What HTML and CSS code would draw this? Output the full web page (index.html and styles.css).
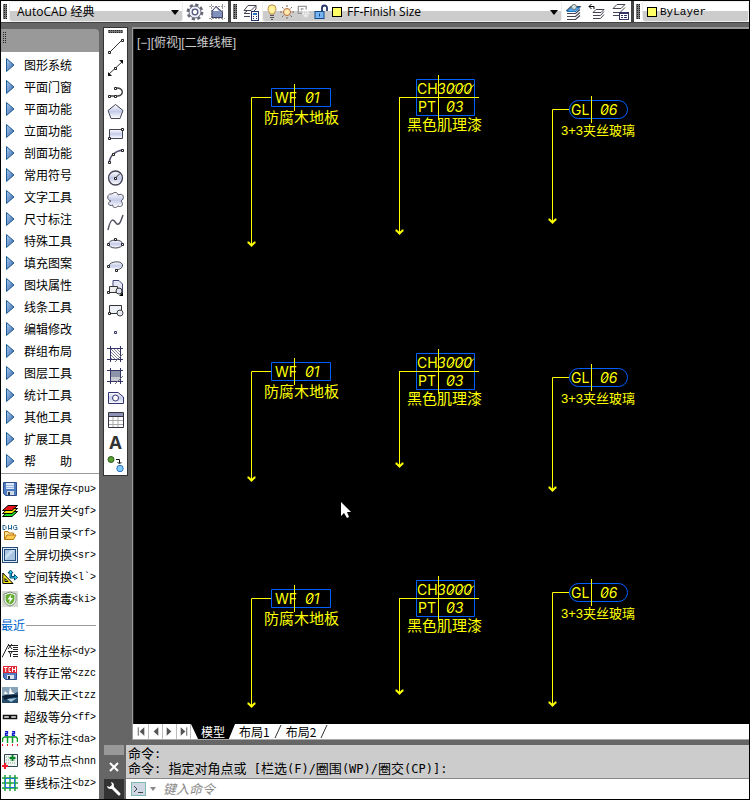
FILE: index.html
```html
<!DOCTYPE html>
<html lang="zh-CN">
<head>
<meta charset="utf-8">
<title>AutoCAD 经典</title>
<meta name="viewport" content="width=device-width, initial-scale=1">
<link rel="stylesheet" href="styles.css">
</head>
<body>
<svg class="defs" aria-hidden="true">
  <defs>
    <linearGradient id="blue" x1="0" y1="0" x2="1" y2="1"><stop offset="0" stop-color="#a9cdf0"/><stop offset="1" stop-color="#3560a8"/></linearGradient>
    <linearGradient id="haze" x1="0" y1="0" x2="0" y2="1"><stop offset="0" stop-color="#fff"/><stop offset=".5" stop-color="#c4cbe8"/><stop offset="1" stop-color="#fff"/></linearGradient>
    <pattern id="diag" width="3" height="3" patternUnits="userSpaceOnUse"><path d="M0 0L3 3" stroke="#667" stroke-width=".8"/></pattern>
    <symbol id="tri" viewBox="0 0 9 14"><path d="M.5 .5L8 7L.5 13.500Z" fill="url(#blue)" stroke="#1f5c93"/></symbol>
    <symbol id="sheets" viewBox="0 0 18 18"><path d="M6 3.500H15L11 7.500H2ZM2 10.500H10.500L15 6.500M2 13.500H10.500L15 9.500M2 16.500H10.500L15 12.500" fill="none" stroke="#445" stroke-width="1.200"/></symbol>
  </defs>
</svg>

<header class="bars">
  <div class="bar">
    <span class="grip"></span>
    <div class="combo combo-space"><select aria-label="工作空间"><option>AutoCAD 经典</option></select></div>
    <div class="icons">
      <button aria-label="工作空间设置"><svg width="18" height="18" viewBox="0 0 18 18"><circle cx="9" cy="9" r="7.200" fill="none" stroke="#667" stroke-width="2.400" stroke-dasharray="3.200 2.450"/><circle cx="9" cy="9" r="6" fill="#eef1fa" stroke="#667"/><circle cx="9" cy="9" r="2.800" fill="#fff" stroke="#557" stroke-width="1.300"/></svg></button>
      <button aria-label="我的工作空间"><svg width="18" height="18" viewBox="0 0 18 18"><path d="M1 3.500H17M1 15.500H17M3.500 1V17M14.500 1V17" stroke="#999" stroke-dasharray="2 1"/><path d="M4 8L8 3.500L14.500 9V14.500H4Z" fill="#8090bd" stroke="#446"/><path d="M5 8H11L8 4.500Z" fill="#fff"/></svg></button>
    </div>
  </div>
  <div class="bar">
    <span class="grip"></span>
    <div class="icons icons-one">
      <button aria-label="图层特性"><svg width="18" height="18" viewBox="0 0 18 18"><path d="M6 2.500H14L9 7.500H2ZM2 10.500H8M2 13.500H8M5 8L2 10.500M14 2.500V6L12 8" fill="none" stroke="#445"/><rect x="9.500" y="8.500" width="7" height="9" fill="#fff" stroke="#236"/><path d="M11 11H15" stroke="#27b" stroke-width="2"/><path d="M11 13.500H12M14 13.500H15M11 15.500H12M14 15.500H15" stroke="#236"/></svg></button>
    </div>
    <div class="combo combo-layer">
      <svg width="10" height="16" viewBox="0 0 10 16"><path d="M3 10C3 8 1 7.500 1 4.800A4 4 0 0 1 9 4.800C9 7.500 7 8 7 10Z" fill="#fff3a0" stroke="#b9863a"/><path d="M3 11.500H7M3 13.500H7M4 15.500H6" stroke="#555"/></svg>
      <svg width="14" height="14" viewBox="0 0 14 14"><circle cx="7" cy="7" r="3.500" fill="#ffe9ac" stroke="#b06b40"/><path d="M7 0V2M7 12V14M0 7H2M12 7H14M2 2L3.500 3.500M10.500 10.500L12 12M12 2L10.500 3.500M2 12L3.500 10.500" stroke="#864"/></svg>
      <svg width="14" height="16" viewBox="0 0 16 16"><path d="M6 9.500H1.500V1.500H10.500V5M5 6V4.500H7.500" fill="none" stroke="#999" stroke-width="1.500"/><path d="M10 6V15M6 10H15M7 7L13 14M13 7L7 14" stroke="#f4f4f4" stroke-width="1.500" stroke-dasharray="2 1"/></svg>
      <svg width="15" height="16" viewBox="0 0 15 16"><path d="M8 8V4A2.500 2.500 0 0 1 13 4V7" fill="none" stroke="#236" stroke-width="1.800"/><rect x="1" y="7.500" width="9" height="7" fill="#7ab4f0" stroke="#124a8c"/><path d="M5.500 9.500V12.500" stroke="#124a8c"/></svg>
      <span class="swatch"></span>
      <select aria-label="图层"><option>FF-Finish Size</option></select>
    </div>
    <div class="icons icons-three">
      <button aria-label="置为当前"><svg width="18" height="18" viewBox="0 0 18 18"><use href="#sheets"/><path d="M6 4.500H15L11 8.500H2Z" fill="#55a8ef" stroke="#27b"/><circle cx="9" cy="4" r="2.500" fill="#d8e4e4" stroke="#677"/></svg></button>
      <button aria-label="上一个图层"><svg width="18" height="18" viewBox="0 0 18 18"><path d="M8 6.500H16L13 9.500H5ZM5 12.500H12.500L16 8.500M5 15.500H12.500L16 11.500" fill="none" stroke="#445"/><path d="M1 3.500H6V6M3.500 1L1 3.500L3.500 6" fill="none" stroke="#000"/></svg></button>
      <button aria-label="图层状态"><svg width="18" height="18" viewBox="0 0 18 18"><path d="M6 1.500H14L10 5.500H2ZM2 9.500H9L14 4.500M2 12.500H8" fill="none" stroke="#445"/><rect x="8.500" y="9.500" width="9" height="7" fill="#fff" stroke="#336"/><path d="M9 10.500H17M10 12.500H12M13 12.500H16M10 14.500H12M13 14.500H16" stroke="#336"/></svg></button>
    </div>
  </div>
  <div class="bar bar-fill">
    <span class="grip"></span>
    <div class="combo combo-color"><span class="swatch"></span><select class="mono" aria-label="颜色"><option>ByLayer</option></select></div>
  </div>
</header>

<div class="work">
  <aside class="side">
    <div class="side-head"><span class="grip-dots"></span></div>
    <nav class="side-body">
      <div class="group">
        <button class="item"><svg class="tri"><use href="#tri"/></svg>图形系统</button>
        <button class="item"><svg class="tri"><use href="#tri"/></svg>平面门窗</button>
        <button class="item"><svg class="tri"><use href="#tri"/></svg>平面功能</button>
        <button class="item"><svg class="tri"><use href="#tri"/></svg>立面功能</button>
        <button class="item"><svg class="tri"><use href="#tri"/></svg>剖面功能</button>
        <button class="item"><svg class="tri"><use href="#tri"/></svg>常用符号</button>
        <button class="item"><svg class="tri"><use href="#tri"/></svg>文字工具</button>
        <button class="item"><svg class="tri"><use href="#tri"/></svg>尺寸标注</button>
        <button class="item"><svg class="tri"><use href="#tri"/></svg>特殊工具</button>
        <button class="item"><svg class="tri"><use href="#tri"/></svg>填充图案</button>
        <button class="item"><svg class="tri"><use href="#tri"/></svg>图块属性</button>
        <button class="item"><svg class="tri"><use href="#tri"/></svg>线条工具</button>
        <button class="item"><svg class="tri"><use href="#tri"/></svg>编辑修改</button>
        <button class="item"><svg class="tri"><use href="#tri"/></svg>群组布局</button>
        <button class="item"><svg class="tri"><use href="#tri"/></svg>图层工具</button>
        <button class="item"><svg class="tri"><use href="#tri"/></svg>统计工具</button>
        <button class="item"><svg class="tri"><use href="#tri"/></svg>其他工具</button>
        <button class="item"><svg class="tri"><use href="#tri"/></svg>扩展工具</button>
        <button class="item"><svg class="tri"><use href="#tri"/></svg>帮　　助</button>
      </div>
      <div class="group group-ruled">
        <button class="item item-pic"><svg class="pic" viewBox="0 0 16 16"><path d="M1.500 1.500H14.500V14.500H3.500L1.500 12.500Z" fill="#4d7cc0" stroke="#2b4c86"/><path d="M4 2H12V8H4Z" fill="#dce9f8"/><path d="M4 4.500H12M4 6.500H12" stroke="#9bb8dc"/><path d="M5 10H12V14H5Z" fill="#cfd8e4"/><path d="M6 11H8V14H6Z" fill="#234"/></svg>清理保存<span class="key">&lt;pu&gt;</span></button>
        <button class="item item-pic"><svg class="pic" viewBox="0 0 16 16"><path d="M6 8.500H15.500L10 13.500H.5Z" fill="#1bdc24" stroke="#000"/><path d="M6 5.500H15.500L10 10.500H.5Z" fill="#ffe800" stroke="#000"/><path d="M6 2.500H15.500L10 7.500H.5Z" fill="#e5151c" stroke="#000"/></svg>归层开关<span class="key">&lt;gf&gt;</span></button>
        <button class="item item-pic"><svg class="pic" viewBox="0 0 16 16"><path d="M1 0V4.500H3L4 3.500V1.500L3 .5H1M6.500 0V4.500L8 3L9.500 4.500V0M15 1L14 .5H12.500L11.500 1.500V3.500L12.500 4.500H15V2.500H13.500" fill="none" stroke="#2d6b96"/><path d="M2.500 14.500V6.500H6L7 8H11.500V10" fill="#ffe28b" stroke="#b87716"/><path d="M2.500 14.500L5 10H14L11.500 14.500Z" fill="#ffc94c" stroke="#b87716"/></svg>当前目录<span class="key">&lt;rf&gt;</span></button>
        <button class="item item-pic"><svg class="pic" viewBox="0 0 16 16"><rect x=".5" y=".5" width="15" height="15" fill="#dcebf7" stroke="#234a78"/><rect x="2.500" y="2.500" width="11" height="11" fill="#a9c3e2" stroke="#234a78"/><path d="M3 13V9L9 3H13Z" fill="#c9dff0"/></svg>全屏切换<span class="key">&lt;sr&gt;</span></button>
        <button class="item item-pic"><svg class="pic" viewBox="0 0 16 16"><path d="M.8 4V14.500H11Z" fill="#f9e51e" stroke="#000"/><path d="M3 9.500V12.500H6Z" fill="#fff" stroke="#000"/><path d="M8 9V4H6L8.500 1L11 4H9.500V7.500H12.500V5.500L15.500 8.500L12.500 11V9Z" fill="#27d5ee" stroke="#064d79"/></svg>空间转换<span class="key">&lt;l`&gt;</span></button>
        <button class="item item-pic"><svg class="pic" viewBox="0 0 16 16"><rect width="16" height="16" fill="#d5dad2"/><path d="M8 1L14 3V8C14 12 11 14 8 15C5 14 2 12 2 8V3Z" fill="#fff" stroke="#798a78"/><path d="M8 2.500L12.500 4V8C12.500 11 10.500 12.500 8 13.500C5.500 12.500 3.500 11 3.500 8V4Z" fill="#64ad31"/><path d="M9.500 3L5.500 8.500H8L6.500 13L11 7H8.500Z" fill="#fff"/></svg>查杀病毒<span class="key">&lt;ki&gt;</span></button>
      </div>
      <h2 class="recent">最近</h2>
      <div class="group">
        <button class="item item-pic"><svg class="pic" viewBox="0 0 16 16"><path d="M0 14.500L6 2.500H16M6 1L10 6M10 1L6 6M11 4.500H16M11 6.500H16M6 8.500H16M7 9L8.500 11V14M10 9L8.500 11M11 11.500H16M11 13.500H16" fill="none" stroke="#222"/></svg>标注坐标<span class="key">&lt;dy&gt;</span></button>
        <button class="item item-pic"><svg class="pic" viewBox="0 0 16 16"><path d="M1.500 1.500H14.500V14.500H3.500L1.500 12.500Z" fill="#557bc2" stroke="#2b4c86"/><path d="M1 1H15V8H1Z" fill="#e02630"/><path d="M2 2.500H5.500M3.700 2.500V7M9 2.500H7V6.500H9M10.500 2V7M13.500 2V7M10.500 4.500H13.500" fill="none" stroke="#fff"/><path d="M5 10H12V14H5Z" fill="#dde4ee"/><path d="M6 11H8V14H6Z" fill="#234"/></svg>转存正常<span class="key">&lt;zzc</span></button>
        <button class="item item-pic"><svg class="pic" viewBox="0 0 16 16"><rect width="16" height="16" fill="#274c6c"/><path d="M0 0H16V5L11 7L6 9H0Z" fill="#88a2b8"/><path d="M8 0L10 5L13 7L7 7ZM3 4L6 7H2Z" fill="#fff"/><path d="M0 9C5 7 10 8 16 8V10C10 10 6 12 3 13Z" fill="#0b2036"/><path d="M5 12L15 11L9 15Z" fill="#9fc3dc"/></svg>加载天正<span class="key">&lt;tzz</span></button>
        <button class="item item-pic"><svg class="pic" viewBox="0 0 16 16"><path d="M1.500 6.500H7.500V9.500H1.500ZM8.500 6.500H14.500V9.500H8.500Z" fill="#fff" stroke="#111" stroke-width="1.500"/><path d="M3 8H6M10 8H13" stroke="#aaa"/></svg>超级等分<span class="key">&lt;ff&gt;</span></button>
        <button class="item item-pic"><svg class="pic" viewBox="0 0 16 16"><path d="M3 .5H5.500V2.500H3.500V4.500H6M10 .5H12.500V2.500H10.500V4.500H13" fill="none" stroke="#12c" stroke-width="1.300"/><path d="M.5 11V7.500L2.500 6H14L15.500 7.500V11M5.500 6V12M10.500 6V12" fill="none" stroke="#079f20" stroke-width="1.500"/><path d="M.5 13V15M5.500 13V15M10.500 13V15M15.500 13V15" stroke="#e12"/></svg>对齐标注<span class="key">&lt;da&gt;</span></button>
        <button class="item item-pic"><svg class="pic" viewBox="0 0 16 16"><path d="M2.500 1.500H15.500V13.500H2.500Z" fill="#edf5ef" stroke="#345"/><path d="M4 4H14M4 7H14M4 10H14" stroke="#90a5a0" stroke-dasharray="1 1"/><path d="M10.500 2V8M7.500 5H13.500" stroke="#078525" stroke-width="2"/><path d="M3 10V16M0 13H6" stroke="#f01b29" stroke-width="2"/></svg>移动节点<span class="key">&lt;hnn</span></button>
        <button class="item item-pic"><svg class="pic" viewBox="0 0 16 16"><path d="M3 0V16M8 0V16M13 0V16M0 3H16M0 8H16M0 13H16" stroke="#18a238" stroke-width="1.500"/><path d="M3.500 3.500H12.500V12.500H3.500Z" fill="none" stroke="#27d"/></svg>垂线标注<span class="key">&lt;bz&gt;</span></button>
      </div>
    </nav>
  </aside>

  <main class="main">
    <div class="stage">
      <div class="tools">
        <div class="tools-head"></div>
        <button aria-label="直线"><svg viewBox="0 0 22 22"><path d="M4 18L17 5" stroke="#333"/><path d="M3.500 16.500h2v2h-2zM16.500 4.500h2v2h-2z" fill="#fff" stroke="#222"/></svg></button>
        <button aria-label="构造线"><svg viewBox="0 0 22 22"><path d="M3 18L18 4" stroke="#333"/><path d="M3 19V15L7 19ZM18 3V7L14 3Z" fill="#111"/><path d="M9.500 10.500h2v2h-2z" fill="#fff" stroke="#222"/></svg></button>
        <button aria-label="多段线"><svg viewBox="0 0 22 22"><path d="M4 17H13C19 17 19 8 11 9" fill="none" stroke="#444" stroke-width="1.500"/><path d="M3.500 16.500h2v2h-2zM9.500 16.500h2v2h-2zM9.500 8.500h2v2h-2z" fill="#fff" stroke="#222"/></svg></button>
        <button aria-label="多边形"><svg viewBox="0 0 22 22"><path d="M10.500 3.500L18 9.500L15 17.500H6L3 9.500Z" fill="url(#haze)" stroke="#445"/></svg></button>
        <button aria-label="矩形"><svg viewBox="0 0 22 22"><path d="M4.500 6.500H17.500V15.500H4.500Z" fill="url(#haze)" stroke="#445"/><path d="M3.500 14.500h2v2h-2zM16.500 5.500h2v2h-2z" fill="#fff" stroke="#222"/></svg></button>
        <button aria-label="圆弧"><svg viewBox="0 0 22 22"><path d="M4 18C5 11 10 6 18 5" fill="none" stroke="#557" stroke-width="1.500"/><path d="M3.500 16.500h2v2h-2zM7.500 8.500h2v2h-2zM16.500 4.500h2v2h-2z" fill="#fff" stroke="#222"/></svg></button>
        <button aria-label="圆"><svg viewBox="0 0 22 22"><circle cx="10.500" cy="11" r="7" fill="url(#haze)" stroke="#445" stroke-width="1.300"/><path d="M10.500 11L15 6.500" stroke="#333"/><path d="M9.500 10.500h2v2h-2z" fill="#fff" stroke="#222"/></svg></button>
        <button aria-label="修订云线"><svg viewBox="0 0 22 22"><path d="M6 12C1 11 2 4 7 5C10 2 13 4 13 6C19 3 20 10 16 12C19 15 17 19 13 17C10 20 7 18 8 16C3 18 2 13 6 12Z" fill="url(#haze)" stroke="#556"/></svg></button>
        <button aria-label="样条曲线"><svg viewBox="0 0 22 22"><path d="M3 19C6 5 9 9 11 12C14 16 16 10 18 4" fill="none" stroke="#556" stroke-width="1.500"/></svg></button>
        <button aria-label="椭圆"><svg viewBox="0 0 22 22"><ellipse cx="10.500" cy="11" rx="7" ry="4" fill="url(#haze)" stroke="#445"/><path d="M2.500 10.500h2v2h-2zM16.500 10.500h2v2h-2zM9.500 5.500h2v2h-2z" fill="#fff" stroke="#222"/></svg></button>
        <button aria-label="椭圆弧"><svg viewBox="0 0 22 22"><path d="M4 12C3 6 17 5 17.500 10C18 14 12 15 10 15" fill="url(#haze)" stroke="#445"/><path d="M2.500 10.500h2v2h-2zM10.500 14.500h2v2h-2z" fill="#fff" stroke="#222"/></svg></button>
        <button aria-label="插入块"><svg viewBox="0 0 22 22"><path d="M8 3.500H14L17.500 7V15.500H8Z" fill="#e4e7f6" stroke="#447"/><path d="M4.500 9.500H12.500V15.500H4.500Z" fill="#eee" stroke="#333"/><circle cx="14" cy="14" r="3" fill="#dde3f0" stroke="#333"/><path d="M2.500 14.500h2v2h-2z" fill="#fff" stroke="#222"/><path d="M14 19H18V15Z" fill="#000"/></svg></button>
        <button aria-label="创建块"><svg viewBox="0 0 22 22"><path d="M4.500 6.500H16.500V14.500H4.500Z" fill="#edf0f6" stroke="#333"/><circle cx="15" cy="14" r="3" fill="#e5e9f2" stroke="#444"/><path d="M3.500 13.500h2v2h-2z" fill="#fff" stroke="#222"/></svg></button>
        <button aria-label="点"><svg viewBox="0 0 22 22"><path d="M9.500 10.500h2v2h-2z" fill="#fff" stroke="#336"/></svg></button>
        <button aria-label="图案填充"><svg viewBox="0 0 22 22"><path d="M5 6H16V16H5Z" fill="url(#diag)"/><path d="M2 5.500H18M2 16.500H18M5.500 3V19M15.500 3V19" stroke="#336"/><path d="M10 19L18 11" stroke="#777"/></svg></button>
        <button aria-label="渐变色"><svg viewBox="0 0 22 22"><path d="M6 6H15V16H6Z" fill="#8c93a8"/><path d="M6 12H15V16H6Z" fill="#c6c9d0"/><path d="M2 5.500H18M2 16.500H18M5.500 3V19M15.500 3V19" stroke="#336"/><path d="M10 19L18 11" stroke="#777"/></svg></button>
        <button aria-label="面域"><svg viewBox="0 0 22 22"><path d="M3.500 16.500V5.500H13L18.500 10V16.500Z" fill="url(#haze)" stroke="#337"/><circle cx="10.500" cy="11" r="3" fill="#fff" stroke="#337"/></svg></button>
        <button aria-label="表格"><svg viewBox="0 0 22 22"><path d="M3 4H18V8H3Z" fill="#8d92b4"/><path d="M3 11.500H18M3 15.500H18M8 8V18M13 8V18" stroke="#aaa"/><path d="M3.500 3.500H18.500V18.500H3.500ZM3 7.500H18" fill="none" stroke="#334"/></svg></button>
        <button class="letter" aria-label="多行文字">A</button>
        <button aria-label="添加选定对象"><svg viewBox="0 0 22 22"><circle cx="6" cy="6.500" r="3" fill="#5c9d35" stroke="#2d621b"/><circle cx="15" cy="15.500" r="3.200" fill="#85c8fa" stroke="#2875b8"/><path d="M11 6.500H14.500V10M12.500 9L14.500 11L16.500 9" fill="none" stroke="#111"/></svg></button>
      </div>

      <section class="view">
        <div class="canvas">
          <p class="view-name">[−][俯视][二维线框]</p>
          <svg class="drawing" role="img" aria-label="材料标注">
            <defs>
              <path id="zero" class="line" d="M1.500 -1L9 -9.500"/>
              <g id="wood"><path class="blue" d="M20.500 -8.500H79.500V9.500H20.500Z"/><path class="line" d="M43.500 -13V14"/><use href="#zero" x="54" y="6"/></g>
              <g id="paint"><path class="blue" d="M17.500 -17.500H75.500V18.500H17.500Z"/><path class="line" d="M39.500 -22V23M0 .5H80"/><use href="#zero" x="48" y="-3"/><use href="#zero" x="57" y="-3"/><use href="#zero" x="66" y="-3"/><use href="#zero" x="47" y="15"/></g>
              <g id="glass"><rect class="blue" x="17.500" y="-8.500" width="58" height="18" rx="9"/><path class="line" d="M39.500 -13V14"/><use href="#zero" x="48" y="6"/></g>
              <path id="head" class="tip" d="M-3.500 -3.500H-2.500L.5 -.5L3.500 -3.500H4.500"/>
            </defs>
            <g transform="translate(117 68)"><path class="line" d="M20 .5H.5V149"/><use href="#head" y="149"/><use href="#wood"/><text class="code" x="24" y="6">WF</text><text class="code slant" x="54" y="6">01</text><text class="name" x="13" y="26">防腐木地板</text></g>
            <g transform="translate(117 342)"><path class="line" d="M20 .5H.5V110"/><use href="#head" y="110"/><use href="#wood"/><text class="code" x="24" y="6">WF</text><text class="code slant" x="54" y="6">01</text><text class="name" x="13" y="26">防腐木地板</text></g>
            <g transform="translate(117 569)"><path class="line" d="M20 .5H.5V109"/><use href="#head" y="109"/><use href="#wood"/><text class="code" x="24" y="6">WF</text><text class="code slant" x="54" y="6">01</text><text class="name" x="13" y="26">防腐木地板</text></g>

            <g transform="translate(265 68)"><path class="line" d="M.5 0V137"/><use href="#head" y="137"/><use href="#paint"/><text class="code" x="18" y="-3">CH</text><text class="code slant" x="38" y="-3">3000</text><text class="code" x="19" y="15">PT</text><text class="code slant" x="47" y="15">03</text><text class="name" x="8" y="33">黑色肌理漆</text></g>
            <g transform="translate(265 342)"><path class="line" d="M.5 0V96"/><use href="#head" y="96"/><use href="#paint"/><text class="code" x="18" y="-3">CH</text><text class="code slant" x="38" y="-3">3000</text><text class="code" x="19" y="15">PT</text><text class="code slant" x="47" y="15">03</text><text class="name" x="8" y="33">黑色肌理漆</text></g>
            <g transform="translate(265 569)"><path class="line" d="M.5 0V96"/><use href="#head" y="96"/><use href="#paint"/><text class="code" x="18" y="-3">CH</text><text class="code slant" x="38" y="-3">3000</text><text class="code" x="19" y="15">PT</text><text class="code slant" x="47" y="15">03</text><text class="name" x="8" y="33">黑色肌理漆</text></g>

            <g transform="translate(418 80)"><path class="line" d="M17 .5H.5V114"/><use href="#head" y="114"/><use href="#glass"/><text class="code" x="19" y="6">GL</text><text class="code slant" x="48" y="6">06</text><text class="name name-small" x="9" y="26">3+3夹丝玻璃</text></g>
            <g transform="translate(418 348)"><path class="line" d="M17 .5H.5V114"/><use href="#head" y="114"/><use href="#glass"/><text class="code" x="19" y="6">GL</text><text class="code slant" x="48" y="6">06</text><text class="name name-small" x="9" y="26">3+3夹丝玻璃</text></g>
            <g transform="translate(418 563)"><path class="line" d="M17 .5H.5V114"/><use href="#head" y="114"/><use href="#glass"/><text class="code" x="19" y="6">GL</text><text class="code slant" x="48" y="6">06</text><text class="name name-small" x="9" y="26">3+3夹丝玻璃</text></g>

            <path d="M207 473V487L210 484L213 489L215 488L213 483H217Z" fill="#fff"/>
          </svg>
        </div>
        <div class="tabs">
          <button class="step" aria-label="第一个"><svg viewBox="0 0 14 14"><path d="M3.500 2V11" stroke="#555"/><path d="M10 2V11L5 6.500Z" fill="#555"/></svg></button>
          <button class="step" aria-label="上一个"><svg viewBox="0 0 14 14"><path d="M10 2V11L5 6.500Z" fill="#555"/></svg></button>
          <button class="step" aria-label="下一个"><svg viewBox="0 0 14 14"><path d="M4 2V11L9 6.500Z" fill="#555"/></svg></button>
          <button class="step" aria-label="最后一个"><svg viewBox="0 0 14 14"><path d="M10.500 2V11" stroke="#555"/><path d="M4 2V11L9 6.500Z" fill="#555"/></svg></button>
          <button class="tab tab-on">模型</button>
          <button class="tab">布局1</button>
          <svg class="slash" viewBox="0 0 8 14"><path d="M1 14L7 1" stroke="#333"/></svg>
          <button class="tab">布局2</button>
          <svg class="slash" viewBox="0 0 8 14"><path d="M1 14L7 1" stroke="#333"/></svg>
        </div>
      </section>
    </div>

    <section class="command">
      <div class="command-side">
        <span class="command-grip"></span>
        <button class="close" aria-label="关闭"><svg width="12" height="12" viewBox="0 0 12 12"><path d="M2 2L10 10M10 2L2 10" stroke="#fff" stroke-width="2"/></svg></button>
        <button class="wrench" aria-label="自定义"><svg width="16" height="16" viewBox="0 0 16 16"><path d="M6 6L13 13" stroke="#fff" stroke-width="3" stroke-linecap="round"/><path d="M5 1A3.500 3.500 0 1 1 1 5L3.500 6L6 4Z" fill="#fff"/></svg></button>
      </div>
      <div class="command-body">
        <div class="log">
          <p><span class="han">命令</span>:</p>
          <p><span class="han">命令</span>: <span class="han">指定对角点或</span> [<span class="han">栏选</span>(F)/<span class="han">圈围</span>(WP)/<span class="han">圈交</span>(CP)]:</p>
        </div>
        <div class="entry">
          <svg width="16" height="14" viewBox="0 0 16 14"><rect x=".5" y=".5" width="14" height="13" fill="#cdd6e2" stroke="#7fbab5"/><path d="M3 4L6 7L3 10M7 10.500H12" fill="none" stroke="#444"/></svg>
          <span class="drop"></span>
          <input type="text" aria-label="命令" placeholder="键入命令">
        </div>
      </div>
    </section>
  </main>
</div>
</body>
</html>
```
FILE: styles.css
```css
* { box-sizing: border-box; }

body {
  margin: 0;
  height: 100vh;
  display: flex;
  flex-direction: column;
  overflow: hidden;
  background: #666;
  border: 1px solid #000;
  color: #000;
  font: 12px/22px "Noto Sans CJK SC", sans-serif;
}

button, select, input {
  margin: 0;
  padding: 0;
  border: 0;
  border-radius: 0;
  background: none;
  color: inherit;
  font: inherit;
}

svg { display: block; flex: none; }
p, h2 { margin: 0; font-size: inherit; font-weight: normal; }
.defs { position: absolute; width: 0; height: 0; }

/* toolbars along the top */
.bars { display: flex; flex: none; height: 22px; gap: 3px; background: #444; }
.bar { display: flex; height: 21px; background: #fff; }
.bar-fill { flex: 1; }
.grip {
  width: 8px;
  padding: 3px 2px;
  background: conic-gradient(#222 25%, transparent 0) 0 0 / 2px 2px content-box #777;
}
.combo {
  position: relative;
  display: flex;
  align-items: center;
  gap: 3px;
  margin-right: 1px;
  border: 1px solid #eee;
  border-radius: 3px;
  background: linear-gradient(#fff 45%, #ccc 45%);
}
.combo select {
  flex: 1;
  min-width: 0;
  height: 100%;
  appearance: none;
  outline: 0;
  font: 12px/18px "Open Sans", "Noto Sans CJK SC", sans-serif;
}
.combo select.mono { font: 11px/18px "Liberation Mono", monospace; }
.combo::after {
  content: "";
  position: absolute;
  right: 3px;
  top: 8px;
  border: 4px solid transparent;
  border-top: 5px solid #000;
  border-bottom: 0;
  pointer-events: none;
}
.combo-space { width: 174px; padding-left: 7px; }
.combo-layer { width: 300px; padding-left: 4px; }
.combo-layer select { padding-left: 2px; }
.combo-color { flex: 1; padding-left: 4px; margin-right: 0; }
.combo-color::after { display: none; }
.swatch { width: 10px; height: 10px; flex: none; border: 1px solid #000; background: #ff6; }
.icons { display: flex; align-items: center; justify-content: space-around; width: 44px; }
.icons-one { width: 23px; }
.icons-three { width: 68px; }

.work { flex: 1; min-height: 0; display: flex; }

/* command list on the left */
.side { width: 98px; flex: none; display: flex; flex-direction: column; padding-top: 6px; }
.side-head { height: 23px; padding: 3px 1px; background: #999; border-radius: 0 4px 0 0; }
.grip-dots { display: block; width: 4px; height: 12px; background: conic-gradient(#222 25%, transparent 0) 0 0 / 2px 2px; }
.side-body { flex: 1; min-height: 0; overflow: hidden; padding-top: 2px; background: #fff; }
.group-ruled { margin-top: 1px; padding-top: 4px; border-top: 1px solid #999; }
.item {
  display: flex;
  align-items: center;
  width: 100%;
  height: 22px;
  padding-left: 5px;
  overflow: hidden;
  white-space: nowrap;
  text-align: left;
}
.item-pic { padding-left: 1px; }
.tri { width: 9px; height: 14px; margin-right: 9px; }
.pic { width: 16px; height: 16px; margin-right: 6px; }
.key { padding-top: 2px; font: 10px/20px "Liberation Mono", monospace; }
.recent { display: flex; align-items: center; gap: 1px; height: 30px; color: #06c; }
.recent::after { content: ""; flex: 1; margin-right: 3px; border-top: 1px solid #999; }

.main { flex: 1; min-width: 0; display: flex; flex-direction: column; }
.stage { flex: 1; min-height: 0; display: flex; align-items: flex-start; padding: 4px 0 5px 4px; }

/* drawing tools */
.tools { width: 25px; flex: none; display: flex; flex-direction: column; border: 1px solid #333; background: #fff; }
.tools-head { height: 7px; padding: 2px 4px; background: conic-gradient(#222 25%, transparent 0) 0 0 / 2px 2px content-box #777; }
.tools button { display: flex; justify-content: center; width: 23px; height: 22px; }
.tools svg { width: 22px; height: 22px; }
.tools .letter { font: bold 18px/22px "Open Sans", sans-serif; color: #333; }

/* viewport */
.view { flex: 1; align-self: stretch; min-width: 0; display: flex; flex-direction: column; margin-left: 4px; border: 1px solid #999; border-width: 2px 0 0 1px; }
.canvas { flex: 1; min-height: 0; position: relative; background: #000; border-left: 1px solid #222; }
.view-name { position: absolute; left: 3px; top: 5px; color: #ccc; font: 12px/18px "Liberation Sans", "Noto Sans CJK SC", sans-serif; }
.drawing { width: 100%; height: 100%; }
.line { fill: none; stroke: #ff0; }
.tip { fill: none; stroke: #ff0; stroke-width: 2; }
.blue { fill: none; stroke: #0060ff; }
.code { fill: #ff0; font: 14px Inter, sans-serif; }
.slant { font-style: italic; }
.name { fill: #ff0; font: 15px "Liberation Sans", "Noto Sans CJK SC", sans-serif; }
.name-small { font-size: 13px; }

.tabs { display: flex; flex: none; height: 16px; padding-left: 2px; background: #fff; border-bottom: 1px solid #aaa; }
.step { width: 14px; border-right: 1px solid #bbb; }
.step svg { width: 13px; height: 14px; }
.tab { padding: 0 4px; line-height: 15px; }
.tab-on { padding: 0 10px; background: #000; color: #fff; clip-path: polygon(0 0, 100% 0, 86% 100%, 16% 100%); }
.slash { width: 8px; height: 14px; }

/* command line */
.command { flex: none; display: flex; }
.command-side { width: 27px; flex: none; display: flex; flex-direction: column; padding: 0 2px 0 5px; }
.command-grip { height: 10px; background: #999; }
.close { flex: 1; display: flex; align-items: center; justify-content: center; }
.wrench { display: flex; align-items: center; justify-content: center; height: 20px; background: #333; }
.command-body { flex: 1; min-width: 0; }
.log { height: 34px; padding: 1px 2px; background: #ccc; border-bottom: 1px solid #888; overflow: hidden; white-space: nowrap; font: 12px/15px "DejaVu Sans Mono", monospace; }
.log p { height: 15px; }
.han { font: 13px/15px "Liberation Sans", "Noto Sans CJK SC", sans-serif; }
.entry { display: flex; align-items: center; height: 20px; padding-left: 5px; background: #fff; }
.drop { margin: 0 7px 0 3px; border: 3px solid transparent; border-top: 4px solid #888; border-bottom: 0; }
.entry input { flex: 1; min-width: 0; height: 20px; outline: 0; font: italic 13px/20px "Noto Sans CJK SC", sans-serif; }
.entry input::placeholder { color: #888; opacity: 1; }
```
